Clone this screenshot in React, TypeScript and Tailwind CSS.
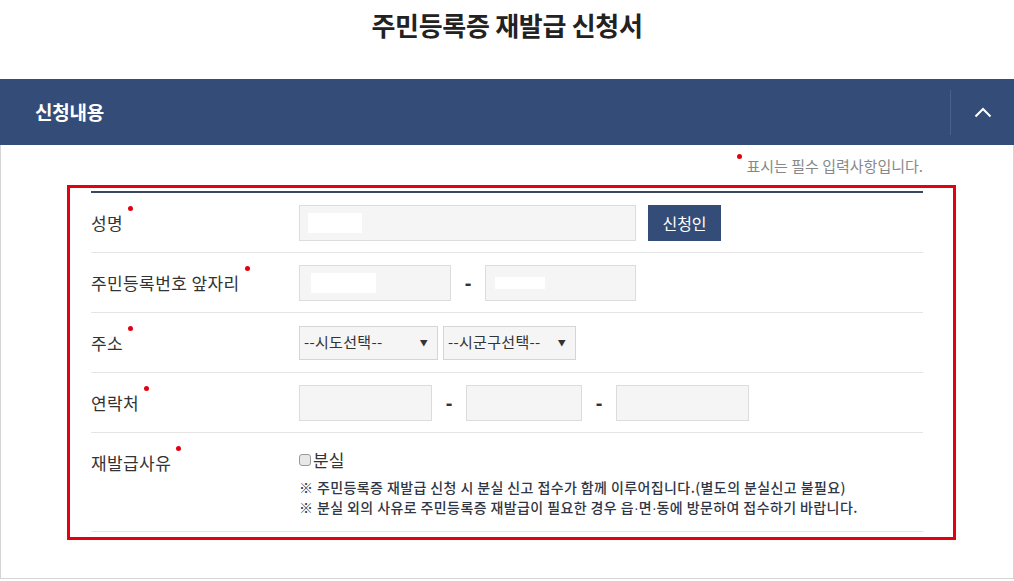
import React from "react";

const font = { fontFamily: '"Noto Sans CJK KR", "Noto Sans", sans-serif' };

const Dot = () => (
  <span className="absolute left-[calc(100%+5px)] top-[-5px] h-[5px] w-[5px] rounded-full bg-[#e3000f]" />
);

const Label = ({ text }: { text: string }) => (
  <span className="relative inline-block text-[17px] leading-[24px] tracking-[0.4px] text-[#333]">
    {text}
    <Dot />
  </span>
);

const Field = ({ w, children }: { w: string; children?: React.ReactNode }) => (
  <div className={`flex h-[36px] items-center border border-[#dcdcdc] bg-[#f5f5f5] ${w}`}>{children}</div>
);

const Dash = () => (
  <div
    className="w-[34px] text-center text-[20px] font-bold leading-[36px] text-[#333]"
    style={{ fontFamily: '"Liberation Sans", Arial, sans-serif' }}
  >
    -
  </div>
);

const Select = ({ w, text }: { w: string; text: string }) => (
  <div
    className={`flex h-[34px] items-center justify-between border border-[#d5d5d5] bg-[#f5f5f5] pl-[4px] pr-[9px] text-[15px] tracking-[0.3px] text-[#333] ${w}`}
  >
    <span>{text}</span>
    <span className="text-[8px]">▼</span>
  </div>
);

const Mid = () => (
  <span style={{ fontFamily: '"Liberation Sans", Arial, sans-serif' }} className="tracking-normal">
    ·
  </span>
);

export default function App() {
  return (
    <div className="w-[1014px] bg-white" style={font}>
      <div className="h-[79px] pt-[10px] text-center">
        <h1 className="text-[26px] font-bold leading-[30px] tracking-[-0.3px] text-[#222]">
          주민등록증 재발급 신청서
        </h1>
      </div>

      <div className="flex h-[66px] items-center bg-[#344d78]">
        <h2 className="flex-1 pl-[35px] text-[19px] font-bold tracking-[-0.2px] text-white">신청내용</h2>
        <div className="h-[45px] w-px bg-[#4a6189]" />
        <div className="flex w-[63px] items-center justify-center">
          <svg width="18" height="11" viewBox="0 0 18 11" fill="none">
            <polyline points="1.5,9.5 9,2 16.5,9.5" stroke="white" strokeWidth="2" />
          </svg>
        </div>
      </div>

      <div className="border-x border-b border-[#d5d5d5] px-[90px] pb-[46px] pt-[11px]">
        <p className="text-right text-[15px] leading-[20px] text-[#888]">
          <span className="relative inline-block">
            <span className="absolute left-[-10px] top-[-2px] h-[5px] w-[5px] rounded-full bg-[#e3000f]" />
            표시는 필수 입력사항입니다.
          </span>
        </p>

        <div className="relative mt-[15px] border-t-2 border-[#3a475e]">
          <div className="pointer-events-none absolute -bottom-[8px] -left-[24px] -right-[33px] -top-[8px] border-[3px] border-[#e3000f]" />

          <div className="flex h-[60px] items-center border-b border-[#e5e5e5]">
            <div className="w-[208px]">
              <Label text="성명" />
            </div>
            <Field w="w-[337px]">
              <span className="ml-[8px] h-[20px] w-[54px] bg-white" />
            </Field>
            <button className="ml-[12px] h-[36px] w-[73px] bg-[#344d78] text-[16px] text-white">신청인</button>
          </div>

          <div className="flex h-[60px] items-center border-b border-[#e5e5e5]">
            <div className="w-[208px]">
              <Label text="주민등록번호 앞자리" />
            </div>
            <Field w="w-[152px]">
              <span className="ml-[11px] h-[20px] w-[65px] bg-white" />
            </Field>
            <Dash />
            <Field w="w-[151px]">
              <span className="ml-[9px] h-[12px] w-[50px] bg-white" />
            </Field>
          </div>

          <div className="flex h-[60px] items-center border-b border-[#e5e5e5]">
            <div className="w-[208px]">
              <Label text="주소" />
            </div>
            <Select w="w-[139px]" text="--시도선택--" />
            <div className="w-[5px]" />
            <Select w="w-[133px]" text="--시군구선택--" />
          </div>

          <div className="flex h-[60px] items-center border-b border-[#e5e5e5]">
            <div className="w-[208px]">
              <Label text="연락처" />
            </div>
            <Field w="w-[133px]" />
            <Dash />
            <Field w="w-[116px]" />
            <Dash />
            <Field w="w-[133px]" />
          </div>

          <div className="flex border-b border-[#e5e5e5]">
            <div className="w-[208px] pt-[18px]">
              <Label text="재발급사유" />
            </div>
            <div className="pb-[13px] pt-[15px]">
              <label className="flex items-center text-[17px] leading-[24px] text-[#333]">
                <span className="mr-[2px] h-[12px] w-[12px] rounded-[3px] border border-[#999] bg-[#e8e8e8]" />
                분실
              </label>
              <p className="mt-[5px] text-[14px] font-medium leading-[20px] tracking-[0.4px] text-[#2f3645]">
                ※ 주민등록증 재발급 신청 시 분실 신고 접수가 함께 이루어집니다.(별도의 분실신고 불필요)
              </p>
              <p className="text-[14px] font-medium leading-[20px] tracking-[0.4px] text-[#2f3645]">
                ※ 분실 외의 사유로 주민등록증 재발급이 필요한 경우 읍<Mid />면<Mid />동에 방문하여 접수하기 바랍니다.
              </p>
            </div>
          </div>
        </div>
      </div>
    </div>
  );
}
